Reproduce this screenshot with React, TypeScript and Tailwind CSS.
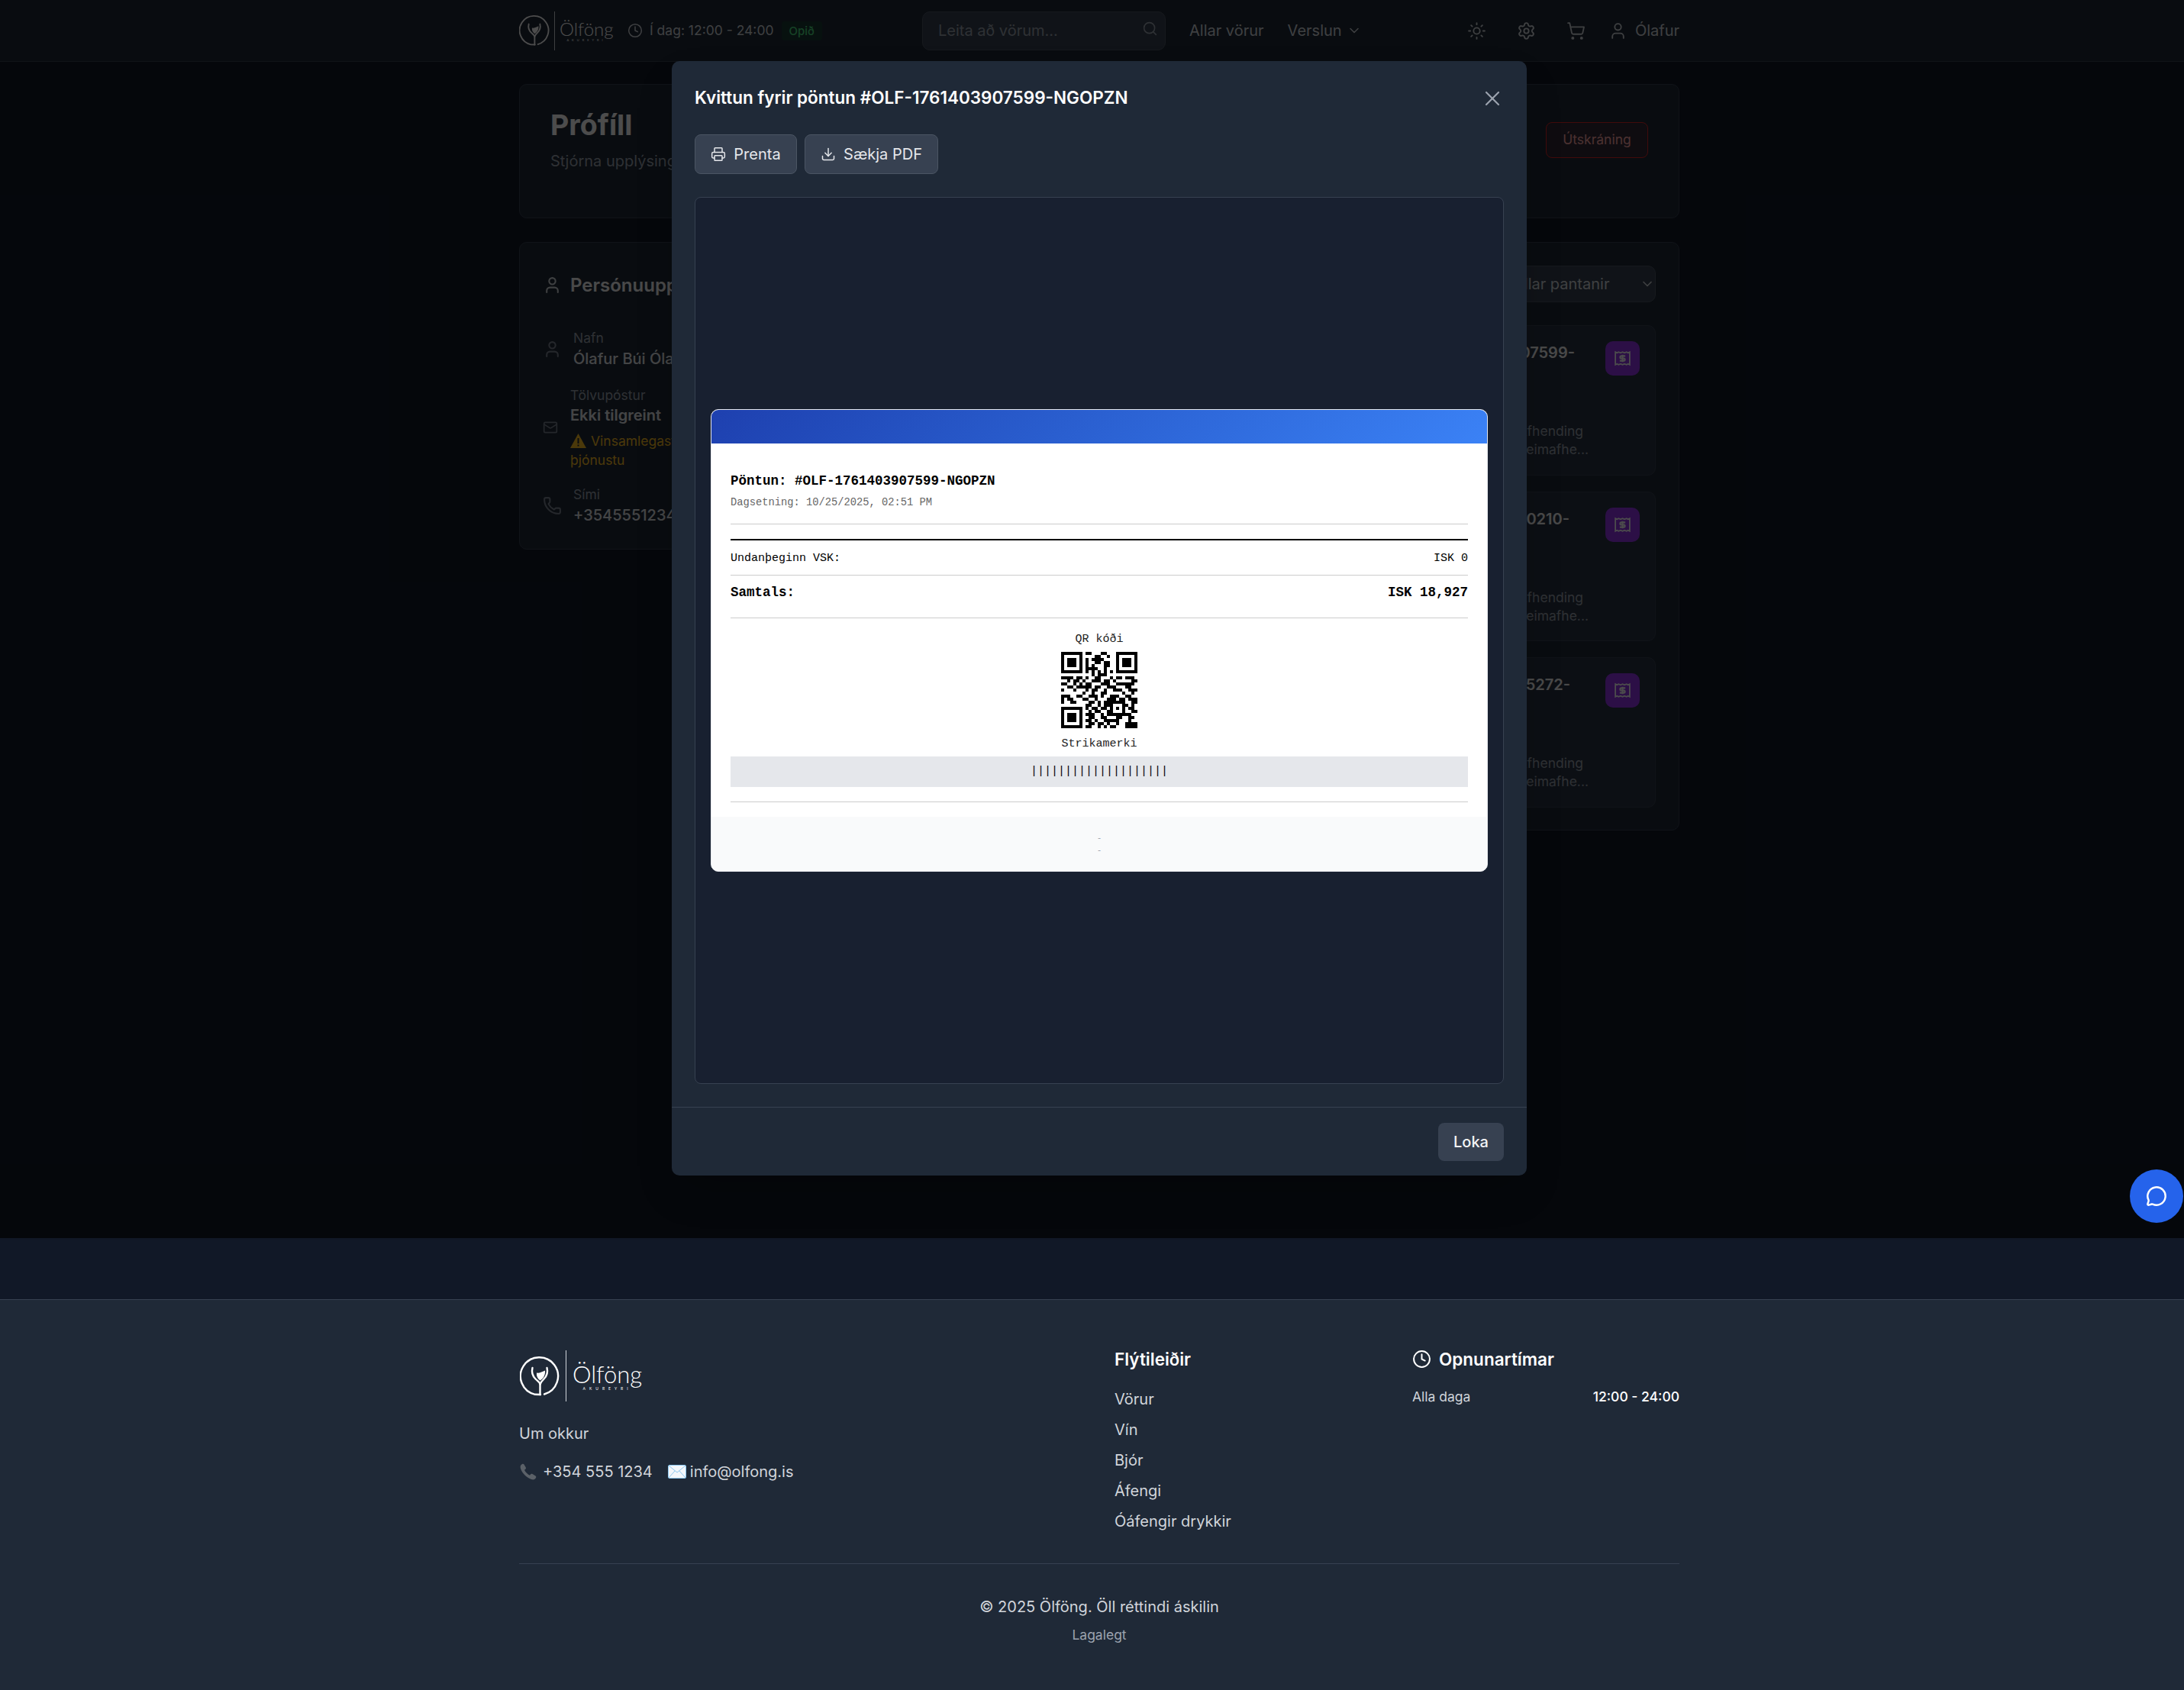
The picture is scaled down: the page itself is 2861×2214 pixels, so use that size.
import React from "react";
import { Clock, Search, ChevronDown, Sun, Settings, ShoppingCart, User, X, Printer, Download, Mail, Phone, MessageCircle } from "lucide-react";

const QR = [
  "1111111011000110001111111",
  "1000001000011001001000001",
  "1011101010111100001011101",
  "1011101010011011001011101",
  "1011101010100011001011101",
  "1000001011110010001000001",
  "1111111010101010101111111",
  "0000000000101110000000000",
  "1111011010011000101101110",
  "0010110100111011010000011",
  "1100101011000111001111110",
  "0011011111011001110001100",
  "1000100010110010011100111",
  "0000000100100110000010010",
  "1110011001110100111001100",
  "1011000110010001110110111",
  "1001100001101011111110011",
  "0000000011001011100011010",
  "1111111010110110101010110",
  "1000001001011001100010011",
  "1011101011100101111111100",
  "1011101001100110001100110",
  "1011101011010011111000100",
  "1000001001101101001001111",
  "1111111011001010110001111",
];

function QrCode() {
  return (
    <svg width="100" height="100" viewBox="0 0 25 25" shapeRendering="crispEdges" className="mx-auto block">
      {QR.map((row, y) =>
        row.split("").map((c, x) => (c === "1" ? <rect key={`${x}-${y}`} x={x} y={y} width="1" height="1" fill="#000" /> : null))
      )}
    </svg>
  );
}

function LogoMark({ className }: { className: string }) {
  return (
    <svg viewBox="0 0 52 52" fill="none" stroke="currentColor" strokeWidth="2.4" strokeLinecap="round" strokeLinejoin="round" className={className}>
      <path d="M32 49.500A24.600 24.600 0 1 0 20 49.800L27 50" />
      <path d="M16.500 15c-1.500 6 .5 11 4 14.500 3 3 6 4.500 6 7V50" />
      <path d="M35.500 15c1.500 6-.5 11-4 14.500-2 2-4 4-5 7" />
      <path d="M22 21.500c3 .5 6-.5 11-3 .5 5-1.500 10-6.500 13-3.500-2.500-5-6-4.500-10z" fill="currentColor" stroke="none" />
    </svg>
  );
}

function ReceiptIcon() {
  return (
    <svg width="25" height="25" viewBox="0 0 24 24" fill="none" stroke="#fff" strokeWidth="1.7">
      <path d="M3 4l2 1 2-1 2.500 1L12 4l2.500 1L17 4l2 1 2-1v16l-2-1-2 1-2.500-1L12 20l-2.500-1L7 20l-2-1-2 1z" />
      <path d="M15.500 9H10.500a1.500 1.500 0 0 0 0 3h3a1.500 1.500 0 0 1 0 3H8.500M12 7.500v9" strokeWidth="2" />
    </svg>
  );
}

function OrderCard({ id, titleClass }: { id: string; titleClass: string }) {
  return (
    <div className="h-[196.5px] rounded-[10px] border border-[#374151] bg-[#2b3544] flex justify-between pt-[20px] pr-[20px]">
      <div className="flex-1 text-right">
        <div className={`${titleClass} text-[20px] leading-[30px] font-semibold text-[#f3f4f6]`}>{id}</div>
        <div className="mt-[76px] text-[17.5px] leading-[24px] text-[#9ca3af]">
          <div className="pr-[29px]">Afhending</div>
          <div className="pr-[22px]">Heimafhe...</div>
        </div>
      </div>
      <div className="w-[45px] h-[45px] rounded-[10px] bg-[#9333ea] flex items-center justify-center">
        <ReceiptIcon />
      </div>
    </div>
  );
}

function PhoneEmoji() {
  return (
    <svg width="24" height="24" viewBox="0 0 24 24" className="shrink-0">
      <path d="M4 2c-2 1-3 3-2 6 2 6 8 12 14 14 3 1 5 0 6-2 .5-1 .3-2-.5-2.500l-4-2.500c-1-.5-2-.3-2.500.5l-1 1.200c-3-1.500-5.500-4-7-7l1.200-1c.8-.6 1-1.500.5-2.500L6.500 2.500C6 1.700 5 1.500 4 2z" fill="#5b6168" />
    </svg>
  );
}

function EnvelopeEmoji() {
  return (
    <svg width="24" height="18" viewBox="0 0 24 18" className="shrink-0">
      <rect x="0.500" y="0.500" width="23" height="17" rx="1.500" fill="#f4f7fb" stroke="#8ec8f0" />
      <path d="M1 1l11 9 11-9M1 17l8-9M23 17l-8-9" fill="none" stroke="#8ec8f0" strokeWidth="1" />
    </svg>
  );
}

export default function App() {
  return (
    <div className="relative w-[2861px] h-[2214px] overflow-hidden bg-[#111827] font-['Inter',sans-serif]">
      <div className="w-[2880px]">
        <div className="relative h-[1622px] bg-[#111827]">
          <header className="h-[81px] bg-[#1f2937] border-b border-[#374151]">
            <div className="w-[1520px] mx-auto h-[80px] flex items-center text-[#d1d5db]">
              <div className="w-[528px] flex items-center">
                <LogoMark className="w-[40px] h-[40px] text-white" />
                <div className="ml-[6px] w-px h-[51px] bg-[#d1d5db]" />
                <div className="ml-[6px] w-[70px] text-white font-['Lato',sans-serif]">
                  <div className="text-[24px] leading-[24px] font-light">Ölföng</div>
                  <div className="text-[4px] leading-[5px] tracking-[4px] text-center whitespace-nowrap">AKUREYRI</div>
                </div>
                <Clock size={20} strokeWidth={1.8} className="ml-[19px] text-[#d1d5db]" />
                <span className="ml-[9px] text-[17.5px] whitespace-nowrap">Í dag: 12:00 - 24:00</span>
                <span className="ml-[10px] px-[10px] h-[25px] leading-[25px] rounded-[4px] bg-[#14532d]/40 text-[15px] font-medium text-[#4ade80]">Opið</span>
              </div>
              <div className="relative w-[319px] h-[51px] rounded-[10px] border border-[#4b5563] bg-[#374151] pl-[20px] flex items-center text-[20px] text-[#9ca3af]">
                Leita að vörum...
                <Search size={21} strokeWidth={1.8} className="absolute right-[9px] top-[11px]" />
              </div>
              <span className="ml-[31px] text-[20px]">Allar vörur</span>
              <span className="ml-[31px] text-[20px] flex items-center gap-[6px]">Verslun <ChevronDown size={20} strokeWidth={1.8} /></span>
              <div className="ml-auto flex items-center gap-[40px]">
                <Sun size={25} strokeWidth={1.8} />
                <Settings size={25} strokeWidth={1.8} />
                <ShoppingCart size={25} strokeWidth={1.8} />
                <div className="ml-[-10px] flex items-center gap-[10px]">
                  <User size={25} strokeWidth={1.8} />
                  <span className="text-[20px]">Ólafur</span>
                </div>
              </div>
            </div>
          </header>

          <main className="w-[1520px] mx-auto pt-[29px]">
            <section className="h-[176px] rounded-[10px] border border-[#374151] bg-[#1f2937] pl-[40px] pr-[40px] flex justify-between">
              <div className="pt-[30px]">
                <h1 className="text-[37.5px] leading-[45px] font-bold text-white">Prófíll</h1>
                <p className="mt-[10px] whitespace-nowrap text-[20px] leading-[30px] text-[#9ca3af]">Stjórna upplýsingum</p>
              </div>
              <button className="mt-[49px] w-[134px] h-[47px] rounded-[8px] border border-[#dc2626] bg-[#ef4444]/10 text-[17.5px] text-[#fca5a5]">Útskráning</button>
            </section>

            <div className="mt-[31px] grid grid-cols-2 gap-[30px] items-start">
              <section className="h-[403px] rounded-[10px] border border-[#374151] bg-[#1f2937] pl-[30px] pt-[38px] text-white">
                <div className="flex items-center gap-[11px] h-[35px]">
                  <User size={25} className="text-[#d1d5db]" />
                  <h2 className="text-[24px] font-semibold text-[#f3f4f6]">Persónuupplýsingar</h2>
                </div>
                <div className="mt-[39px] flex items-center gap-[15px]">
                  <User size={25} className="text-[#7b8290]" />
                  <div>
                    <div className="text-[17.5px] leading-[25px] text-[#9ca3af]">Nafn</div>
                    <div className="text-[20px] leading-[30px] font-medium text-[#e5e7eb]">Ólafur Búi Ólafsson</div>
                  </div>
                </div>
                <div className="mt-[20px] flex items-center gap-[16px]">
                  <Mail size={20} className="text-[#7b8290]" />
                  <div>
                    <div className="text-[17.5px] leading-[25px] text-[#9ca3af]">Tölvupóstur</div>
                    <div className="mt-[2px] text-[20px] leading-[25px] font-semibold text-[#e5e7eb]">Ekki tilgreint</div>
                    <div className="mt-[8px] text-[17.5px] leading-[25px] text-[#fbbf24]">
                      <div className="flex items-center gap-[6px]">
                        <svg width="21" height="19" viewBox="0 0 21 19"><path d="M10.500 0L21 19H0z" fill="#fbbf24" /><path d="M9.500 6h2v7h-2zM9.500 14.500h2v2h-2z" fill="#1f2937" /></svg>
                        <span>Vinsamlegast hafðu samband við</span>
                      </div>
                      <div>þjónustu</div>
                    </div>
                  </div>
                </div>
                <div className="mt-[20px] flex items-center gap-[15px]">
                  <Phone size={25} className="text-[#7b8290]" />
                  <div>
                    <div className="text-[17.5px] leading-[25px] text-[#9ca3af]">Sími</div>
                    <div className="text-[20px] leading-[30px] font-medium text-[#e5e7eb]">+3545551234</div>
                  </div>
                </div>
              </section>

              <section className="rounded-[10px] border border-[#374151] bg-[#1f2937] pt-[30px] pb-[29px] px-[30px]">
                <div className="flex justify-end">
                  <div className="w-[220px] h-[48px] rounded-[10px] border border-[#4b5563] bg-[#374151] pl-[33px] flex items-center justify-between text-[20px] text-[#d1d5db]">
                    Allar pantanir
                    <ChevronDown size={20} />
                  </div>
                </div>
                <div className="mt-[30px] flex flex-col gap-[21px]">
                  <OrderCard id="#OLF-1761403907599-" titleClass="pr-[40px]" />
                  <OrderCard id="#OLF-1761403900210-" titleClass="pr-[47px]" />
                  <OrderCard id="#OLF-1761403905272-" titleClass="pr-[46px]" />
                </div>
              </section>
            </div>
          </main>

          <div className="absolute inset-0 bg-black/70" />

          <div className="absolute top-[80px] left-[880px] w-[1120px] h-[1460px] rounded-[10px] bg-[#1f2937] shadow-2xl flex flex-col">
            <div className="px-[30px] pt-[30px] flex items-center justify-between h-[65px] shrink-0">
              <h3 className="text-[22.5px] leading-[35px] font-semibold text-white">Kvittun fyrir pöntun #OLF-1761403907599-NGOPZN</h3>
              <X size={32} strokeWidth={1.6} className="text-[#9ca3af] mr-[-1px] mt-[2px]" />
            </div>
            <div className="mt-[31px] px-[30px] flex gap-[10px] shrink-0">
              <button className="h-[52px] w-[134px] rounded-[8px] border border-[#4b5563] bg-[#374151] flex items-center justify-center gap-[10px] text-[20px] text-[#e5e7eb]">
                <Printer size={20} strokeWidth={1.8} />Prenta
              </button>
              <button className="h-[52px] w-[175px] rounded-[8px] border border-[#4b5563] bg-[#374151] flex items-center justify-center gap-[10px] text-[20px] text-[#e5e7eb]">
                <Download size={20} strokeWidth={1.8} />Sækja PDF
              </button>
            </div>
            <div className="mt-[30px] mx-[30px] h-[1162px] rounded-[8px] border border-[#374151] bg-[#182030] flex items-center justify-center shrink-0">
              <div className="w-[1018px] rounded-[10px] overflow-hidden border border-[#e5e7eb] bg-white font-['Liberation_Mono',monospace] text-black">
                <div className="h-[44px] bg-linear-135 from-[#1e40af] to-[#3b82f6]" />
                <div className="px-[25px] pt-[39px]">
                  <div className="text-[17.5px] leading-[20px] font-bold">Pöntun: #OLF-1761403907599-NGOPZN</div>
                  <div className="mt-[11px] text-[13.75px] leading-[16px] text-[#666]">Dagsetning: 10/25/2025, 02:51 PM</div>
                  <div className="mt-[19px] border-t border-[#ccc]" />
                  <div className="mt-[19px] border-t-2 border-black" />
                  <div className="pt-[14px] pb-[11px] flex justify-between text-[15px] leading-[20px] border-b border-[#ccc]">
                    <span>Undanþeginn VSK:</span><span>ISK 0</span>
                  </div>
                  <div className="pt-[12px] pb-[23px] flex justify-between text-[17.5px] leading-[20px] font-bold border-b border-[#ccc]">
                    <span>Samtals:</span><span>ISK 18,927</span>
                  </div>
                  <div className="pt-[20px] text-center text-[15px] leading-[16px] text-[#222]">QR kóði</div>
                  <div className="mt-[8px]"><QrCode /></div>
                  <div className="mt-[13px] text-center text-[15px] leading-[16px] text-[#222]">Strikamerki</div>
                  <div className="mt-[8px] h-[40px] bg-[#e5e7eb] flex items-center justify-center text-[15px] whitespace-nowrap">||||||||||||||||||||</div>
                  <div className="mt-[19px] border-t border-[#ccc]" />
                </div>
                <div className="mt-[19px] h-[71px] bg-[#f9fafb] flex flex-col items-center justify-center text-[11px] leading-[16px] text-[#9ca3af]">
                  <div>-</div><div>-</div>
                </div>
              </div>
            </div>
            <div className="mt-[30px] flex-1 border-t border-[#374151] flex items-center justify-end px-[30px]">
              <button className="w-[86px] h-[50px] rounded-[8px] bg-[#374151] text-[20px] font-medium text-[#f3f4f6]">Loka</button>
            </div>
          </div>
        </div>

        <div className="h-[80px] bg-[#111827]" />

        <footer className="h-[512px] bg-[#1f2937] border-t border-[#374151] text-[#d1d5db]">
          <div className="w-[1520px] mx-auto pt-[60px]">
            <div className="grid grid-cols-4 gap-[40px]">
              <div className="col-span-2">
                <div className="mt-[6px] flex items-center h-[67px] text-white">
                  <LogoMark className="w-[52px] h-[52px] ml-[1px]" />
                  <div className="ml-[8px] w-px h-[67px] bg-[#d1d5db]" />
                  <div className="ml-[8px] font-['Lato',sans-serif]">
                    <div className="text-[31px] leading-[32px] font-light">Ölföng</div>
                    <div className="text-[5px] leading-[6px] tracking-[5px] text-center whitespace-nowrap">AKUREYRI</div>
                  </div>
                </div>
                <p className="mt-[27px] text-[20px] leading-[30px]">Um okkur</p>
                <div className="mt-[20px] flex items-center text-[20px] leading-[30px]">
                  <PhoneEmoji />
                  <span className="ml-[7px]">+354 555 1234</span>
                  <span className="ml-[20px]"><EnvelopeEmoji /></span>
                  <span className="ml-[5px]">info@olfong.is</span>
                </div>
              </div>
              <div>
                <h4 className="text-[22.5px] leading-[35px] font-semibold text-white">Flýtileiðir</h4>
                <ul className="mt-[23px] flex flex-col gap-[15px] text-[20px] leading-[25px]">
                  <li>Vörur</li>
                  <li>Vín</li>
                  <li>Bjór</li>
                  <li>Áfengi</li>
                  <li>Óáfengir drykkir</li>
                </ul>
              </div>
              <div>
                <h4 className="flex items-center gap-[10px] text-[22.5px] leading-[35px] font-semibold text-white">
                  <Clock size={25} strokeWidth={1.9} />Opnunartímar
                </h4>
                <div className="mt-[19px] flex justify-between text-[17.5px] leading-[25px]">
                  <span>Alla daga</span>
                  <span className="font-medium text-white">12:00 - 24:00</span>
                </div>
              </div>
            </div>
            <div className="mt-[42px] pt-[41px] border-t border-[#374151] text-center">
              <p className="text-[20px] leading-[30px]">© 2025 Ölföng. Öll réttindi áskilin</p>
              <p className="mt-[12px] text-[17.5px] leading-[20px] text-[#9ca3af]">Lagalegt</p>
            </div>
          </div>
        </footer>
      </div>

      <button className="absolute left-[2790px] top-[1532px] w-[70px] h-[70px] rounded-full bg-[#2563eb] flex items-center justify-center text-white">
        <MessageCircle size={28} strokeWidth={2.1} />
      </button>
    </div>
  );
}
